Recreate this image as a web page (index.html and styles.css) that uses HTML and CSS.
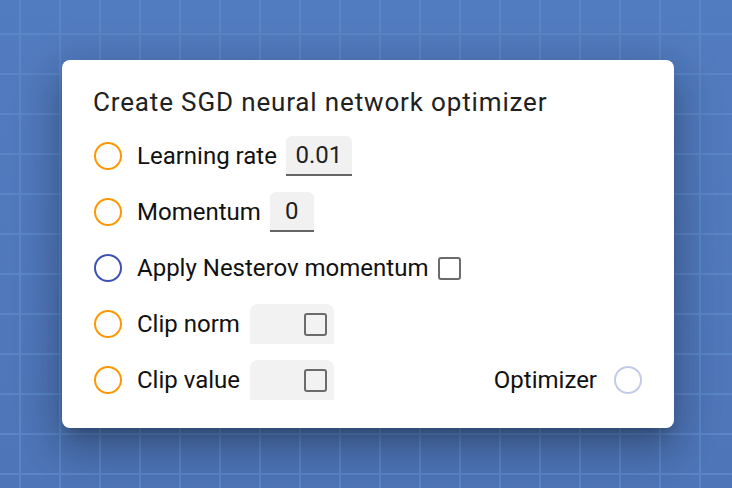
FILE: index.html
```html
<!DOCTYPE html>
<html lang="en">
<head>
<meta charset="utf-8">
<title>Create SGD neural network optimizer</title>
<link rel="stylesheet" href="styles.css">
</head>
<body>
  <div class="card">
    <h1 class="title">Create SGD neural network optimizer</h1>
    <div class="rows">
      <div class="row">
        <span class="port port-orange"></span>
        <span class="label">Learning rate</span>
        <span class="field field-wide">0.01</span>
      </div>
      <div class="row">
        <span class="port port-orange"></span>
        <span class="label">Momentum</span>
        <span class="field field-narrow">0</span>
      </div>
      <div class="row">
        <span class="port port-blue"></span>
        <span class="label">Apply Nesterov momentum</span>
        <span class="checkbox"></span>
      </div>
      <div class="row">
        <span class="port port-orange"></span>
        <span class="label">Clip norm</span>
        <span class="toggle-box"><span class="checkbox"></span></span>
      </div>
      <div class="row">
        <span class="port port-orange"></span>
        <span class="label">Clip value</span>
        <span class="toggle-box"><span class="checkbox"></span></span>
        <span class="output">
          <span class="label">Optimizer</span>
          <span class="port port-lavender"></span>
        </span>
      </div>
    </div>
  </div>
</body>
</html>
```

FILE: styles.css
```css
html, body {
  margin: 0;
  padding: 0;
}

body {
  width: 732px;
  height: 488px;
  overflow: hidden;
  font-family: Roboto, "Liberation Sans", sans-serif;
  background-color: #5079bd;
  background-image:
    linear-gradient(to right, #5a86c7 0, #5a86c7 2px, transparent 2px),
    linear-gradient(to bottom, #5a86c7 0, #5a86c7 2px, transparent 2px),
    linear-gradient(to bottom, #527cc0, #4e75b8);
  background-size: 40px 40px, 40px 40px, 100% 100%;
  background-position: 19px 0, 0 33px, 0 0;
  display: flex;
  align-items: center;
  justify-content: center;
}

.card {
  box-sizing: border-box;
  width: 612px;
  height: 368px;
  margin-left: 4px;
  background: #ffffff;
  border-radius: 8px;
  padding: 26px 32px 28px 32px;
  box-shadow:
    0 11px 15px -7px rgba(0, 0, 0, 0.22),
    0 24px 38px 3px rgba(0, 0, 0, 0.16),
    0 9px 46px 8px rgba(0, 0, 0, 0.14);
  display: flex;
  flex-direction: column;
}

.title {
  margin: 0 0 18px -1px;
  font-size: 26px;
  line-height: 32px;
  letter-spacing: 0.85px;
  font-weight: 400;
  color: #212121;
  white-space: nowrap;
}

.rows {
  display: flex;
  flex-direction: column;
  gap: 16px;
}

.row {
  display: flex;
  align-items: center;
  height: 40px;
}

.port {
  box-sizing: border-box;
  width: 28px;
  height: 28px;
  border-radius: 50%;
  border: 2px solid #ff9800;
  flex: none;
  margin-right: 15px;
}

.port-blue {
  border-color: #3f51b5;
}

.port-lavender {
  border-color: #c5cae9;
  margin-right: 0;
  margin-left: 17px;
}

.label {
  font-size: 24px;
  line-height: 28px;
  color: #111111;
  white-space: nowrap;
}

.field {
  box-sizing: border-box;
  height: 40px;
  margin-left: 9px;
  background: #f1f1f1;
  border-radius: 6px 6px 0 0;
  border-bottom: 2px solid #666666;
  font-size: 24px;
  line-height: 38px;
  color: #1f1f1f;
  text-align: center;
}

.field-wide {
  width: 66px;
}

.field-narrow {
  width: 44px;
}

.checkbox {
  box-sizing: border-box;
  width: 23px;
  height: 23px;
  border: 2px solid #6b6b6b;
  border-radius: 3px;
  flex: none;
  margin-left: 10px;
}

.toggle-box {
  box-sizing: border-box;
  width: 84px;
  height: 40px;
  margin-left: 10px;
  background: #f2f2f2;
  border-radius: 8px 8px 0 0;
  display: flex;
  align-items: center;
  justify-content: flex-end;
  padding-right: 7px;
}

.toggle-box .checkbox {
  margin-left: 0;
}

.output {
  margin-left: auto;
  display: flex;
  align-items: center;
}
```
